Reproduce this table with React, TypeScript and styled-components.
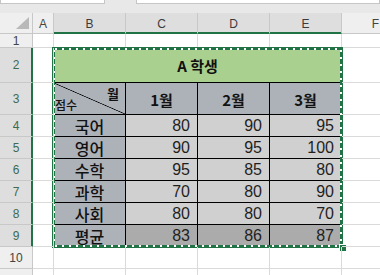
import React from 'react';
import styled, { createGlobalStyle, css } from 'styled-components';

const GlobalStyle = createGlobalStyle`
  html, body {
    margin: 0;
    padding: 0;
    background: #ffffff;
    overflow: hidden;
  }
  * {
    box-sizing: border-box;
  }
`;

const GREEN = '#217346';
const KR = `"Noto Sans CJK KR", "Noto Sans", sans-serif`;
const LATIN = `"Liberation Sans", Arial, sans-serif`;

const Window = styled.div`
  width: 380px;
  height: 275px;
  overflow: hidden;
  background: #ffffff;
  font-family: ${LATIN};
`;

const FormulaStrip = styled.div`
  display: flex;
  align-items: flex-start;
  height: 13px;
  background: #e8e8e8;
`;

const InputBox = styled.div<{ $width?: number; $offset?: number }>`
  height: 4px;
  background: #ffffff;
  border: 1px solid #c6c6c6;
  border-top: none;
  margin-left: ${({ $offset }) => $offset ?? 0}px;
  ${({ $width }) => ($width ? `width: ${$width}px;` : 'flex: 1;')}
`;

const Sheet = styled.div`
  display: grid;
  width: 410px;
  grid-template-columns: 33px 21px 72px 72px 72px 72px 68px;
  grid-template-rows: 21px 14px 35px 32px repeat(8, 22px);
`;

const Corner = styled.div`
  position: relative;
  background: #efefef;
  border-right: 1px solid #c8c8c8;
  border-bottom: 1px solid #c8c8c8;

  &::after {
    content: '';
    position: absolute;
    right: 3px;
    bottom: 4px;
    width: 0;
    height: 0;
    border-left: 13px solid transparent;
    border-bottom: 12px solid #b9b9b9;
  }
`;

const ColHeader = styled.div<{ $selected?: boolean }>`
  display: flex;
  align-items: center;
  justify-content: center;
  font-size: 12px;
  color: #444;
  background: #efefef;
  border-right: 1px solid #c8c8c8;
  border-bottom: 1px solid #c8c8c8;
  padding-top: 1px;
  ${({ $selected }) =>
    $selected &&
    css`
      background: #dedede;
      color: #3b3b3b;
      border-bottom-color: ${GREEN};
      box-shadow: inset 0 -1px 0 ${GREEN};
    `}
`;

const RowHeader = styled.div<{ $selected?: boolean }>`
  display: flex;
  align-items: center;
  justify-content: center;
  font-size: 12px;
  color: #444;
  background: #efefef;
  border-right: 1px solid #c8c8c8;
  border-bottom: 1px solid #c8c8c8;
  ${({ $selected }) =>
    $selected &&
    css`
      background: #dedede;
      color: #3d6b4e;
      border-right-color: ${GREEN};
      box-shadow: inset -1px 0 0 ${GREEN};
    `}
`;

const Cell = styled.div`
  border-right: 1px solid #dadada;
  border-bottom: 1px solid #dadada;
  overflow: visible;
  position: relative;
`;

const SpillText = styled.span`
  position: absolute;
  left: 57px;
  top: 2px;
  font-family: ${KR};
  font-size: 14px;
  color: #222;
  white-space: nowrap;
`;

const Block = styled.div`
  grid-column: 3 / 7;
  grid-row: 3 / 11;
  position: relative;
  display: grid;
  grid-template-columns: repeat(4, 72px);
  grid-template-rows: 35px 32px repeat(6, 22px);
`;

const Marquee = styled.div`
  position: absolute;
  top: -1px;
  left: -2px;
  right: -1px;
  bottom: -1px;
  border: 3px solid ${GREEN};
  pointer-events: none;

  &::after {
    content: '';
    position: absolute;
    inset: -3px;
    background:
      repeating-linear-gradient(90deg, #ffffff 0 2px, transparent 2px 7px) 3px 1px / calc(100% - 6px) 2px no-repeat,
      repeating-linear-gradient(90deg, #ffffff 0 2px, transparent 2px 7px) 3px calc(100% - 1px) / calc(100% - 6px) 2px no-repeat,
      repeating-linear-gradient(180deg, #ffffff 0 2px, transparent 2px 7px) 1px 3px / 2px calc(100% - 6px) no-repeat,
      repeating-linear-gradient(180deg, #ffffff 0 2px, transparent 2px 7px) calc(100% - 1px) 3px / 2px calc(100% - 6px) no-repeat;
  }
`;

const FillHandle = styled.div`
  position: absolute;
  right: -4px;
  bottom: -4px;
  width: 6px;
  height: 6px;
  background: ${GREEN};
  outline: 1px solid #ffffff;
`;

const TableCell = styled.div<{ $bg: string; $align?: 'center' | 'right' }>`
  display: flex;
  align-items: center;
  justify-content: ${({ $align }) => ($align === 'right' ? 'flex-end' : 'center')};
  padding-right: ${({ $align }) => ($align === 'right' ? '7px' : '0')};
  background: ${({ $bg }) => $bg};
  border-right: 1px solid #000;
  border-bottom: 1px solid #000;
  color: #111;
`;

const TitleCell = styled(TableCell)`
  grid-column: 1 / 5;
  font-family: ${KR};
  font-weight: 700;
  font-size: 15px;
`;

const MonthCell = styled(TableCell)`
  font-family: ${KR};
  font-weight: 700;
  font-size: 15px;
  padding-top: 1px;
`;

const SubjectCell = styled(TableCell)`
  font-family: ${KR};
  font-size: 16px;
  font-weight: 500;
`;

const ScoreCell = styled(TableCell)`
  font-family: ${LATIN};
  font-size: 16px;
  color: #1f1f1f;
`;

const DiagonalCell = styled.div`
  position: relative;
  background:
    linear-gradient(to top right, transparent calc(50% - 0.7px), #000 50%, transparent calc(50% + 0.7px)),
    #adb1b8;
  border-right: 1px solid #000;
  border-bottom: 1px solid #000;
  font-family: ${KR};
  font-size: 12px;
  color: #111;
`;

const DiagTop = styled.span`
  position: absolute;
  top: 1px;
  right: 6px;
  font-weight: 700;
  font-size: 13px;
`;

const DiagBottom = styled.span`
  position: absolute;
  left: 1px;
  bottom: 1px;
  font-weight: 500;
`;

const HEADER_BG = '#adb1b8';
const DATA_BG = '#d0d0d0';
const AVG_BG = '#ababab';

const columns = ['A', 'B', 'C', 'D', 'E', 'F'];
const selectedCols = ['B', 'C', 'D', 'E'];
const months = ['1월', '2월', '3월'];

const rows: { subject: string; scores: number[]; avg?: boolean }[] = [
  { subject: '국어', scores: [80, 90, 95] },
  { subject: '영어', scores: [90, 95, 100] },
  { subject: '수학', scores: [95, 85, 80] },
  { subject: '과학', scores: [70, 80, 90] },
  { subject: '사회', scores: [80, 80, 70] },
  { subject: '평균', scores: [83, 86, 87], avg: true },
];

export default function App() {
  return (
    <Window>
      <GlobalStyle />
      <FormulaStrip>
        <InputBox $width={105} />
        <InputBox $offset={31} />
      </FormulaStrip>
      <Sheet>
        <Corner />
        {columns.map((c) => (
          <ColHeader key={c} $selected={selectedCols.includes(c)}>
            {c}
          </ColHeader>
        ))}

        <RowHeader>1</RowHeader>
        {columns.map((c) => (
          <Cell key={`r1-${c}`} />
        ))}

        <Block>
          <TitleCell $bg="#a9d08e">A 학생</TitleCell>
          <DiagonalCell>
            <DiagTop>월</DiagTop>
            <DiagBottom>점수</DiagBottom>
          </DiagonalCell>
          {months.map((m) => (
            <MonthCell key={m} $bg={HEADER_BG}>
              {m}
            </MonthCell>
          ))}
          {rows.map((r) => (
            <React.Fragment key={r.subject}>
              <SubjectCell $bg={HEADER_BG}>{r.subject}</SubjectCell>
              {r.scores.map((s, i) => (
                <ScoreCell key={i} $bg={r.avg ? AVG_BG : DATA_BG} $align="right">
                  {s}
                </ScoreCell>
              ))}
            </React.Fragment>
          ))}
          <Marquee />
          <FillHandle />
        </Block>

        {[2, 3, 4, 5, 6, 7, 8, 9].map((n) => (
          <React.Fragment key={n}>
            <RowHeader $selected>{n}</RowHeader>
            <Cell />
            <Cell />
          </React.Fragment>
        ))}

        <RowHeader>10</RowHeader>
        {columns.map((c) => (
          <Cell key={`r10-${c}`} />
        ))}

        <RowHeader />
        <Cell />
        <Cell />
        <Cell>
          <SpillText>비내</SpillText>
        </Cell>
        <Cell />
        <Cell />
        <Cell />
        <Cell />
      </Sheet>
    </Window>
  );
}
